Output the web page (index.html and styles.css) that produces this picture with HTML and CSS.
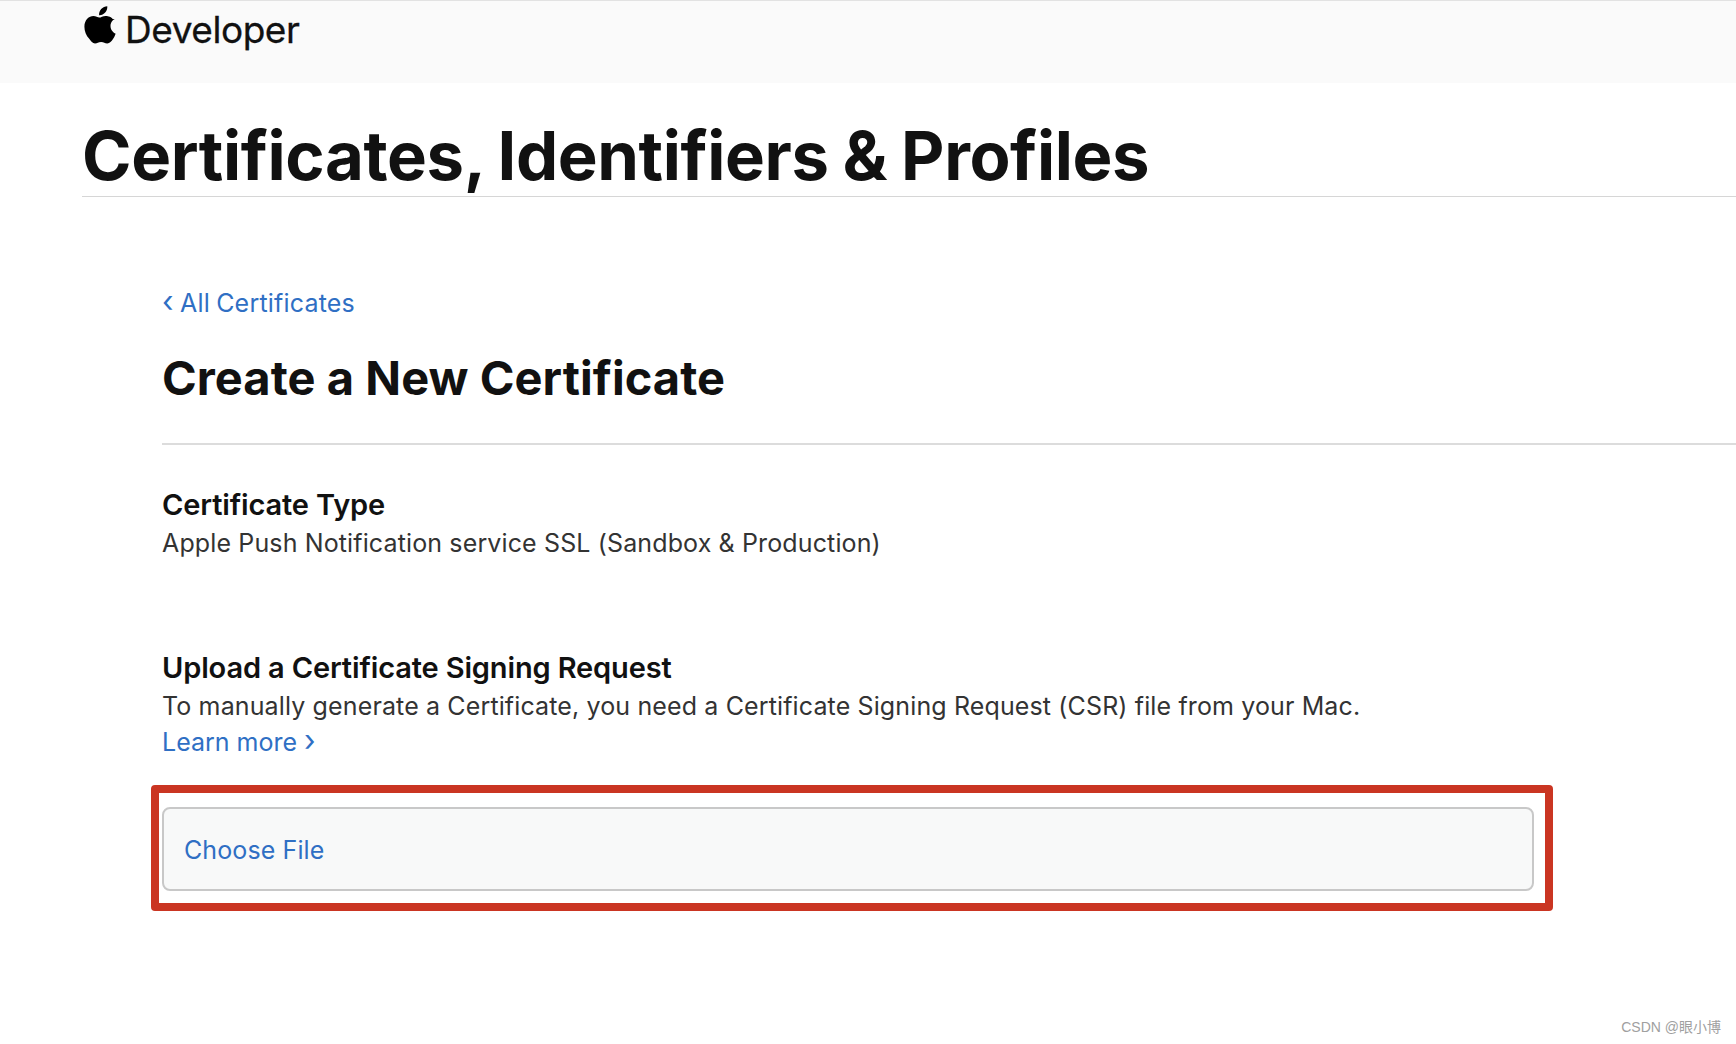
FILE: index.html
```html
<!DOCTYPE html>
<html lang="en">
<head>
<meta charset="utf-8">
<title>Certificates, Identifiers &amp; Profiles</title>
<link rel="stylesheet" href="styles.css">
</head>
<body>
<header class="topbar">
  <svg class="apple" viewBox="0 0 32 38" aria-hidden="true"><path d="M23.3 0.2c0.2 2.4-0.7 4.600-2.100 6.300-1.500 1.700-3.800 3-6.100 2.800-0.300-2.300 0.800-4.700 2.100-6.200C18.700 1.400 21.200 0.200 23.300 0.200zM30.700 12.900c-0.300 0.200-4.200 2.400-4.200 7.200 0 5.600 4.900 7.500 5.100 7.600-0.100 0.300-0.800 2.700-2.600 5.300-1.600 2.200-3.200 4.500-5.800 4.500-2.500 0-3.200-1.500-6.100-1.500-2.800 0-3.800 1.500-6.100 1.500-2.400 0-4-2.100-5.800-4.700C2.100 29.800 0.400 25.200 0.400 20.800c0-7 4.600-10.800 9-10.800 2.400 0 4.400 1.600 5.900 1.600 1.400 0 3.600-1.700 6.400-1.700 1 0 4.800 0.100 7 3z"/></svg>
  <span class="brand">Developer</span>
</header>
<main class="page">
  <h1 class="title">Certificates, Identifiers &amp; Profiles</h1>
  <section class="content">
    <a class="back link"><span class="chev">‹</span> All Certificates</a>
    <h2 class="subtitle">Create a New Certificate</h2>
    <div class="block-type">
      <h3 class="label">Certificate Type</h3>
      <p class="text">Apple Push Notification service SSL (Sandbox &amp; Production)</p>
    </div>
    <div class="block-upload">
      <h3 class="label">Upload a Certificate Signing Request</h3>
      <p class="text">To manually generate a Certificate, you need a Certificate Signing Request (CSR) file from your Mac.</p>
      <a class="link learn">Learn more <span class="chev">›</span></a>
    </div>
    <div class="highlight">
      <div class="filebox"><a class="link choose">Choose File</a></div>
    </div>
  </section>
</main>
<div class="watermark">CSDN @眼小博</div>
</body>
</html>
```
FILE: styles.css
```css
* { box-sizing: border-box; }
html, body { margin: 0; padding: 0; }
body {
  width: 1736px;
  height: 1044px;
  overflow: hidden;
  position: relative;
  background: #fff;
  color: #333;
  font-family: Inter, "Liberation Sans", sans-serif;
}
.topbar {
  height: 83px;
  background: #fafafa;
  border-top: 1px solid #e2e2e2;
  padding: 5px 0 0 84px;
  display: flex;
  align-items: flex-start;
  gap: 9px;
}
.apple { width: 32px; height: 38px; fill: #000; flex: none; }
.brand {
  font-size: 37px;
  line-height: 48px;
  letter-spacing: -0.45px;
  color: #111;
  font-weight: 400;
  -webkit-text-stroke: 0.3px #111;
}
.page { padding-left: 82px; }
.title {
  margin: 0;
  height: 114px;
  padding: 33px 0 0 0;
  font-size: 67px;
  line-height: 80px;
  font-weight: 700;
  letter-spacing: -0.4px;
  word-spacing: -1.5px;
  color: #111;
  border-bottom: 1px solid #d6d6d6;
}
.content { padding: 89px 0 0 80px; }
.link { color: #2f6fc4; }
.back { display: block; font-size: 25px; line-height: 30px; height: 30px; letter-spacing: 0.2px; word-spacing: -1px; }
.chev { font-size: 30px; line-height: 30px; }
.subtitle {
  margin: 0;
  padding-top: 34px;
  height: 129px;
  font-size: 47px;
  line-height: 56px;
  font-weight: 700;
  color: #111;
  letter-spacing: 0.05px;
  border-bottom: 2px solid #dcdcdc;
}
.block-type { padding-top: 42px; }
.block-upload { padding-top: 89px; }
.label {
  margin: 0;
  font-size: 29px;
  line-height: 36px;
  font-weight: 600;
  color: #111;
  letter-spacing: -0.14px;
}
.text {
  margin: 2px 0 0;
  font-size: 25px;
  line-height: 36px;
  letter-spacing: 0.13px;
  color: #333;
}
.learn { display: block; font-size: 25px; line-height: 36px; }
.highlight {
  width: 1402px;
  height: 126px;
  margin: 25px 0 0 -11px;
  padding: 14px 3px 12px;
  border: 8px solid #ca3522;
  border-radius: 4px;
}
.filebox {
  width: 1372px;
  height: 84px;
  background: #f8f9f9;
  border: 2px solid #c8c8c8;
  border-radius: 8px;
  padding: 2px 20px 0;
  display: flex;
  align-items: center;
}
.choose { font-size: 25px; line-height: 30px; letter-spacing: 0.1px; }
.watermark {
  position: absolute;
  right: 15px;
  bottom: 8px;
  font-family: "Liberation Sans", "Noto Sans CJK SC", sans-serif;
  font-size: 14px;
  line-height: 18px;
  color: #a0a0a0;
}
```
